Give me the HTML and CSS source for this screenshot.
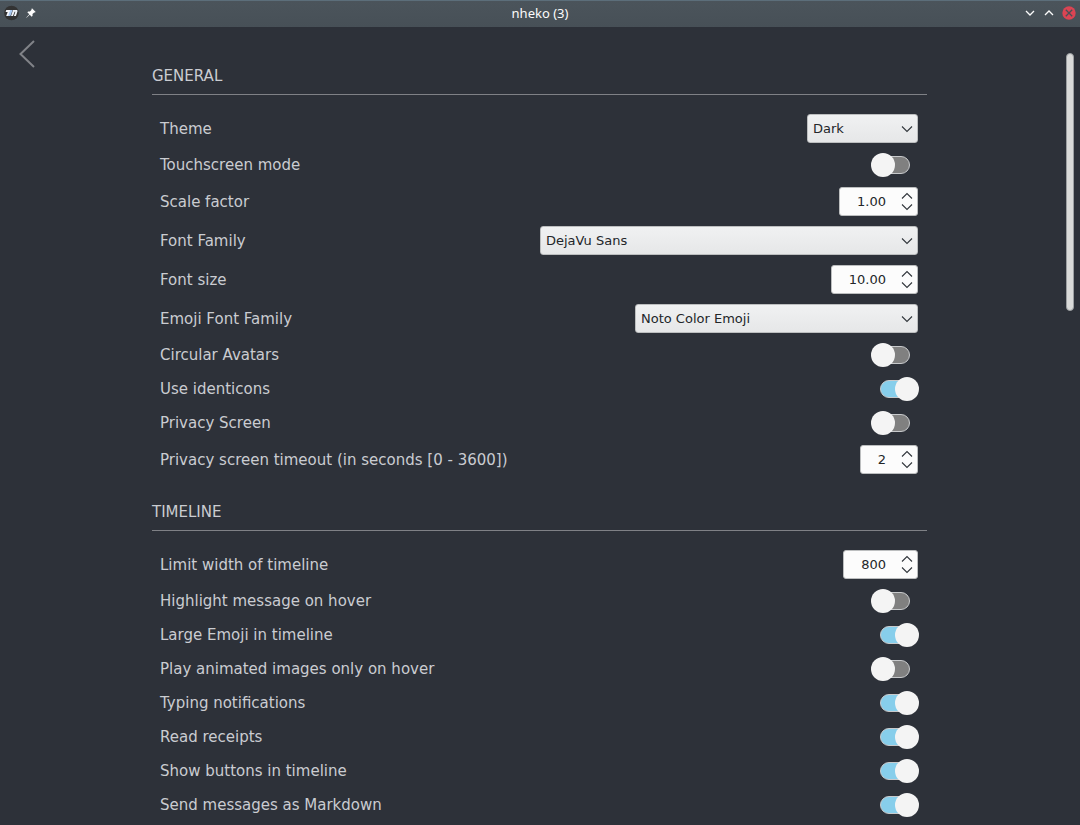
FILE: index.html
```html
<!DOCTYPE html>
<html lang="en">

<head>
    <meta charset="UTF-8">
    <meta name="viewport" content="width=device-width, initial-scale=1.0">
    <title>nheko (3)</title>
    <link rel="stylesheet" href="styles.css">
</head>

<body>
    <svg class="symbols" aria-hidden="true">
        <symbol id="down" viewBox="0 0 12 8"><path d="M1 1.5l5 5 5-5" /></symbol>
        <symbol id="up" viewBox="0 0 12 8"><path d="M1 6.5l5-5 5 5" /></symbol>
        <symbol id="down-small" viewBox="0 0 12 8"><path d="M2 2l4 4 4-4" /></symbol>
        <symbol id="up-small" viewBox="0 0 12 8"><path d="M2 6l4-4 4 4" /></symbol>
    </svg>

    <header class="titlebar">
        <div class="titlebar-left">
            <svg class="logo" viewBox="0 0 16 16" aria-hidden="true">
                <circle cx="7.5" cy="8" r="7.3" fill="#333333" />
                <path d="M2.3 5h4.9L5 11H2.2l1.5-4H1.6z" fill="#f4f6fa" />
                <path d="M6.3 5h2.4l-2.3 6H4.100z" fill="#a9c9f2" />
                <path d="M9 5h3.200c1.200 0 1.600.7 1.200 1.700L11.900 11H9.900l1.500-4.300h-.8L9 11H7z" fill="#eef2f8" />
            </svg>
            <svg class="pin" viewBox="0 0 10 10" aria-hidden="true">
                <path d="M6 .3L9.700 4l-.9.6-.6-.2-1.700 1.700.1 1.700-.9.900-2-2L.6 9.700.3 9.400 3.300 6.300l-2-2 .9-.9 1.700.1L5.600 1.800l-.2-.6z" fill="#fcfcfc" />
            </svg>
        </div>
        <h1>nheko (3)</h1>
        <div class="titlebar-right">
            <button type="button" aria-label="Minimize"><svg class="chevron"><use href="#down-small" /></svg></button>
            <button type="button" aria-label="Maximize"><svg class="chevron"><use href="#up-small" /></svg></button>
            <button type="button" class="close" aria-label="Close">
                <svg viewBox="0 0 14 14"><circle cx="7" cy="7" r="6.700" /><path d="M3.800 3.800l6.400 6.400M10.200 3.800l-6.400 6.400" /></svg>
            </button>
        </div>
    </header>

    <div class="page">
        <button type="button" class="back" aria-label="Back">
            <svg viewBox="0 0 18 30"><path d="M16 2L2.500 15 16 28" /></svg>
        </button>

        <main>
            <section>
                <h2>GENERAL</h2>
                <div class="row">
                    <label for="theme">Theme</label>
                    <div class="combo combo-small">
                        <select id="theme"><option>Dark</option><option>Light</option><option>System</option></select>
                        <svg class="chevron"><use href="#down" /></svg>
                    </div>
                </div>
                <div class="row">
                    <label for="touchscreen">Touchscreen mode</label>
                    <input type="checkbox" id="touchscreen">
                </div>
                <div class="row">
                    <label for="scale">Scale factor</label>
                    <div class="spin">
                        <input type="number" id="scale" value="1.00" step="0.25">
                        <div class="steps">
                            <button type="button" aria-label="Increase"><svg class="chevron"><use href="#up" /></svg></button>
                            <button type="button" aria-label="Decrease"><svg class="chevron"><use href="#down" /></svg></button>
                        </div>
                    </div>
                </div>
                <div class="row">
                    <label for="font">Font Family</label>
                    <div class="combo combo-large">
                        <select id="font"><option>DejaVu Sans</option></select>
                        <svg class="chevron"><use href="#down" /></svg>
                    </div>
                </div>
                <div class="row">
                    <label for="fontsize">Font size</label>
                    <div class="spin">
                        <input type="number" id="fontsize" value="10.00" step="0.5">
                        <div class="steps">
                            <button type="button" aria-label="Increase"><svg class="chevron"><use href="#up" /></svg></button>
                            <button type="button" aria-label="Decrease"><svg class="chevron"><use href="#down" /></svg></button>
                        </div>
                    </div>
                </div>
                <div class="row">
                    <label for="emoji">Emoji Font Family</label>
                    <div class="combo combo-medium">
                        <select id="emoji"><option>Noto Color Emoji</option></select>
                        <svg class="chevron"><use href="#down" /></svg>
                    </div>
                </div>
                <div class="row">
                    <label for="avatars">Circular Avatars</label>
                    <input type="checkbox" id="avatars">
                </div>
                <div class="row">
                    <label for="identicons">Use identicons</label>
                    <input type="checkbox" id="identicons" checked>
                </div>
                <div class="row">
                    <label for="privacy">Privacy Screen</label>
                    <input type="checkbox" id="privacy">
                </div>
                <div class="row">
                    <label for="timeout">Privacy screen timeout (in seconds [0 - 3600])</label>
                    <div class="spin">
                        <input type="number" id="timeout" value="2" min="0" max="3600">
                        <div class="steps">
                            <button type="button" aria-label="Increase"><svg class="chevron"><use href="#up" /></svg></button>
                            <button type="button" aria-label="Decrease"><svg class="chevron"><use href="#down" /></svg></button>
                        </div>
                    </div>
                </div>
            </section>

            <section>
                <h2>TIMELINE</h2>
                <div class="row">
                    <label for="limit">Limit width of timeline</label>
                    <div class="spin">
                        <input type="number" id="limit" value="800">
                        <div class="steps">
                            <button type="button" aria-label="Increase"><svg class="chevron"><use href="#up" /></svg></button>
                            <button type="button" aria-label="Decrease"><svg class="chevron"><use href="#down" /></svg></button>
                        </div>
                    </div>
                </div>
                <div class="row">
                    <label for="highlight">Highlight message on hover</label>
                    <input type="checkbox" id="highlight">
                </div>
                <div class="row">
                    <label for="largeemoji">Large Emoji in timeline</label>
                    <input type="checkbox" id="largeemoji" checked>
                </div>
                <div class="row">
                    <label for="animated">Play animated images only on hover</label>
                    <input type="checkbox" id="animated">
                </div>
                <div class="row">
                    <label for="typing">Typing notifications</label>
                    <input type="checkbox" id="typing" checked>
                </div>
                <div class="row">
                    <label for="receipts">Read receipts</label>
                    <input type="checkbox" id="receipts" checked>
                </div>
                <div class="row">
                    <label for="buttons">Show buttons in timeline</label>
                    <input type="checkbox" id="buttons" checked>
                </div>
                <div class="row">
                    <label for="markdown">Send messages as Markdown</label>
                    <input type="checkbox" id="markdown" checked>
                </div>
            </section>
        </main>

        <div class="scrollbar"><div class="thumb"></div></div>
    </div>
</body>

</html>
```

FILE: styles.css
```css
*,
*::before,
*::after {
    box-sizing: border-box;
}

body {
    margin: 0;
    background-color: #2d3139;
    color: #caccd1;
    font-family: "DejaVu Sans", sans-serif;
    font-size: 15px;
}

button {
    padding: 0;
    border: none;
    background: none;
}

svg {
    display: block;
    fill: none;
}

.symbols {
    display: none;
}

.chevron {
    width: 12px;
    height: 8px;
    stroke: #31363b;
    stroke-width: 1.1;
}

/* window title bar */
.titlebar {
    display: grid;
    grid-template-columns: 1fr auto 1fr;
    align-items: center;
    height: 27px;
    padding: 0 4px 2px;
    border-top: 1px solid #5c6e7a;
    background: linear-gradient(#4b545b, #475057);
}

.titlebar h1 {
    margin: 0;
    color: #fcfcfc;
    font-family: "Noto Sans", sans-serif;
    font-size: 13px;
    font-weight: normal;
}

.titlebar-left,
.titlebar-right {
    display: flex;
    align-items: center;
    gap: 7px;
}

.titlebar-left {
    gap: 6px;
}

.titlebar-right {
    justify-content: flex-end;
}

.titlebar .chevron {
    stroke: #fcfcfc;
    stroke-width: 1.3;
}

.logo {
    width: 16px;
    height: 16px;
}

.pin {
    width: 10px;
    height: 10px;
}

.close svg {
    width: 14px;
    height: 14px;
}

.close circle {
    fill: #da4453;
}

.close path {
    stroke: #475057;
    stroke-width: 1.3;
}

/* settings page */
.page {
    display: grid;
    grid-template-columns: 1fr minmax(0, 775px) 1fr;
    padding-right: 1px;
}

.back {
    justify-self: start;
    align-self: start;
    margin: 12px 18px;
}

.back svg {
    width: 18px;
    height: 30px;
    stroke: #818388;
    stroke-width: 2;
}

main {
    padding: 40px 0 8px;
}

section {
    display: flex;
    flex-direction: column;
    gap: 10px;
    margin-bottom: 29px;
}

section:last-child {
    margin-bottom: 0;
}

h2 {
    margin: 0 0 9px;
    padding-bottom: 9px;
    border-bottom: 1px solid #7f8186;
    font-size: 15px;
    font-weight: normal;
    line-height: 18px;
}

.row {
    display: flex;
    align-items: center;
    justify-content: space-between;
    padding: 0 8px;
}

.row label {
    line-height: 18px;
}

.combo,
.spin {
    height: 29px;
    margin-right: 1px;
    border: 1px solid #bcbebf;
    border-radius: 3px;
    color: #232629;
}

.combo {
    display: grid;
    align-items: center;
    background: linear-gradient(#f0f1f2, #e6e7e8);
}

.combo select,
.combo svg {
    grid-area: 1 / 1;
}

.combo select {
    width: 100%;
    height: 27px;
    padding: 0 24px 0 5px;
    border: none;
    appearance: none;
    background: none;
    color: inherit;
    font: 13px "DejaVu Sans", sans-serif;
}

.combo svg {
    justify-self: end;
    margin-right: 4px;
    pointer-events: none;
}

.combo-small {
    width: 111px;
}

.combo-medium {
    width: 283px;
}

.combo-large {
    width: 378px;
}

.spin {
    display: flex;
    align-items: center;
    padding: 0 4px 0 17px;
    background-color: #fcfcfc;
}

.spin input {
    field-sizing: content;
    padding: 0;
    border: none;
    appearance: textfield;
    background: none;
    color: inherit;
    font: 13px "DejaVu Sans", sans-serif;
}

.spin input::-webkit-inner-spin-button {
    display: none;
}

.steps {
    display: flex;
    flex-direction: column;
    gap: 3px;
    margin-left: 15px;
}

/* toggle switches */
input[type="checkbox"] {
    display: grid;
    align-items: center;
    width: 48px;
    height: 24px;
    margin: 0;
    appearance: none;
}

input[type="checkbox"]::before,
input[type="checkbox"]::after {
    content: "";
    grid-area: 1 / 1;
}

input[type="checkbox"]::before {
    justify-self: center;
    width: 30px;
    height: 18px;
    border: 1px solid #c8cacc;
    border-radius: 9px;
    background-color: #808080;
}

input[type="checkbox"]::after {
    width: 24px;
    height: 24px;
    border-radius: 50%;
    background-color: #f4f4f4;
}

input[type="checkbox"]:checked::before {
    background-color: #87ceeb;
}

input[type="checkbox"]:checked::after {
    justify-self: end;
}

.scrollbar {
    justify-self: end;
    padding: 26px 5px 0 0;
}

.thumb {
    width: 8px;
    height: 258px;
    border: 1px solid #9c9fa2;
    border-radius: 4px;
    background-color: #d9dad9;
}
```
